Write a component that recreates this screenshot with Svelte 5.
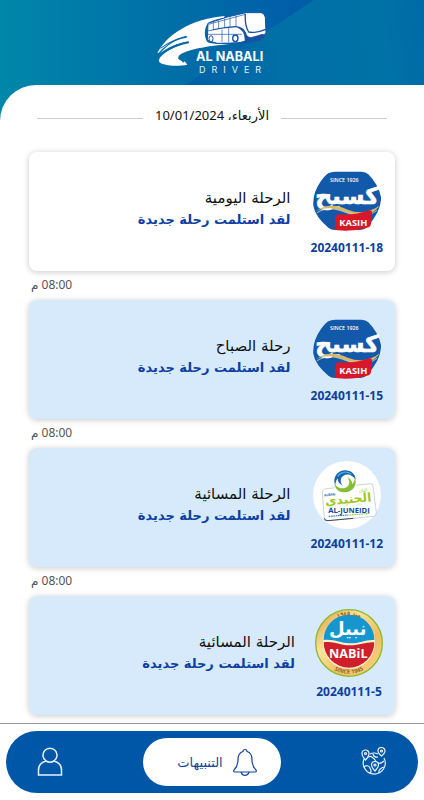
<script lang="ts">
	type Trip = { code: string; title: string; brand: 'kasih' | 'juneidi' | 'nabil'; unread: boolean; time?: string };

	const trips: Trip[] = [
		{ code: '20240111-18', title: 'الرحلة اليومية', brand: 'kasih', unread: false, time: '08:00 م' },
		{ code: '20240111-15', title: 'رحلة الصباح', brand: 'kasih', unread: true, time: '08:00 م' },
		{ code: '20240111-12', title: 'الرحلة المسائية', brand: 'juneidi', unread: true, time: '08:00 م' },
		{ code: '20240111-5', title: 'الرحلة المسائية', brand: 'nabil', unread: true }
	];

	let tab = $state('alerts');
</script>

<!-- company logos, all drawn on a 204 unit square -->
{#snippet kasih()}
	<svg class="brand" viewBox="38 12 204 204" direction="ltr" role="img" aria-label="Kasih">
		<path d="M84 37 Q92 32 104 32 L184 32 Q196 32 204 40 Q234 70 242 108 Q244 150 200 198 Q192 207 180 207 L104 207 Q92 207 84 200 Q44 166 39 134 Q36 96 62 60 Q74 43 84 37Z" fill="#125aa9" />
		<text x="132" y="62" font-size="16" font-weight="600" text-anchor="middle" fill="#fff" class="latin">SINCE 1926</text>
		<text x="140" y="128" font-size="70" font-weight="700" text-anchor="middle" class="arabic" fill="#fff" stroke="#fff" stroke-width="2">كسيح</text>
		<path d="M46 151 C82 126 112 134 142 146 C178 160 210 154 239 133 C212 170 176 168 140 155 C104 141 76 136 46 151Z" fill="#d9b767" />
		<path d="M50 155 C82 136 108 144 138 155 C172 168 204 168 230 148" fill="none" stroke="#f8ecd0" stroke-width="2" />
		<path d="M116 160 Q164 164 206 148 Q216 146 215 158 L212 188 Q211 198 200 200 Q160 212 112 208 Q102 207 103 198 L106 170 Q108 160 116 160Z" fill="#d8182a" />
		<text x="159" y="194" font-size="28" font-weight="700" text-anchor="middle" fill="#fff" class="latin">KASIH</text>
	</svg>
{/snippet}

{#snippet juneidi()}
	<svg class="brand" viewBox="39 30 204 204" direction="ltr" role="img" aria-label="Al-Juneidi">
		<circle cx="141" cy="132" r="102" fill="#fff" />
		<path d="M80 113 L210 98 Q218 97 219 106 L229 184 Q230 194 220 196 L84 209 Q74 210 73 200 L67 126 Q66 115 80 113Z" fill="#fff" stroke="#b4bcc2" stroke-width="2" />
		<path d="M73 202 Q74 210 84 209 L160 202" fill="none" stroke="#3d4854" stroke-width="3" />
		<circle cx="135" cy="91" r="36" fill="#fff" />
		<path d="M106 104 C96 80 112 58 136 58 C154 58 166 70 167 86 C158 72 142 66 130 74 C120 81 120 94 128 104 C118 98 112 92 114 82 C108 88 106 96 106 104Z" fill="#1764ad" />
		<path d="M104 98 C112 112 130 116 141 108 C150 101 150 88 142 78 C152 84 158 92 156 100 C162 94 165 86 164 78 C174 102 158 124 134 124 C116 124 104 112 104 98Z" fill="#84bf33" />
		<path d="M113 76 C120 63 140 59 154 70" fill="none" stroke="#54a9d9" stroke-width="4" />
		<g transform="rotate(-5 146 160)">
			<text x="92" y="130" font-size="10" font-weight="700" text-anchor="middle" fill="#1764ad" class="latin">ALBAN</text>
			<text x="192" y="126" font-size="13" text-anchor="middle" fill="#84bf33" class="arabic">البان</text>
			<text x="146" y="157" font-size="37" font-weight="700" text-anchor="middle" fill="#a3c724" class="arabic">الجنيدي</text>
		</g>
		<text x="147" y="187" font-size="23" font-weight="700" text-anchor="middle" fill="#17488f" class="latin">AL-JUNEIDI</text>
		<path d="M86 196 L145 192" stroke="#1764ad" stroke-width="3" stroke-dasharray="5 2" />
		<path d="M149 192 L209 187" stroke="#84bf33" stroke-width="3" stroke-dasharray="5 2" />
	</svg>
{/snippet}

{#snippet nabil()}
	<svg class="brand" viewBox="47 25 204 204" direction="ltr" role="img" aria-label="Nabil">
		<defs>
			<linearGradient id="gold" x1="0" y1="0" x2="1" y2="1">
				<stop offset="0" stop-color="#d89a3c" />
				<stop offset="0.35" stop-color="#fbe49b" />
				<stop offset="0.65" stop-color="#eebd62" />
				<stop offset="1" stop-color="#f7d98b" />
			</linearGradient>
			<path id="arcTop" d="M65 127 A84 84 0 0 1 233 127" />
			<path id="arcBottom" d="M57 127 A92 92 0 0 0 241 127" />
		</defs>
		<circle cx="149" cy="127" r="100" fill="url(#gold)" stroke="#8cb82b" stroke-width="4" />
		<circle cx="149" cy="127" r="78" fill="#fff3cf" />
		<path d="M73 118 A76 76 0 0 1 225 118 C198 116 182 129 150 128 C120 127 104 114 73 118Z" fill="#1596cf" />
		<path d="M73 125 C104 120 119 133 149 134 C182 135 198 123 225 125 A76 76 0 0 1 73 125Z" fill="#cf1f2c" />
		<text x="145" y="104" font-size="54" font-weight="700" text-anchor="middle" fill="#fff" class="arabic">نبيل</text>
		<text x="147" y="171" font-size="38" font-weight="700" text-anchor="middle" fill="#fff" class="latin">NABiL</text>
		<text font-size="16" font-weight="700" fill="#94672b" class="arabic" text-anchor="middle"><textPath href="#arcTop" startOffset="50%">منذ ١٩٤٥</textPath></text>
		<text font-size="17" font-weight="700" fill="#94672b" class="latin" text-anchor="middle"><textPath href="#arcBottom" startOffset="50%">SINCE 1945</textPath></text>
	</svg>
{/snippet}

<div class="app" dir="rtl" lang="ar">
	<header>
		<svg class="logo" viewBox="0 0 432 255" direction="ltr" role="img" aria-label="Al Nabali Driver">
			<!-- road -->
			<path d="M52 160 C80 104 150 58 254 48 L252 54 C226 58 208 64 202 72 C192 88 192 110 202 126 C212 132 240 132 268 132 C214 137 158 145 127 160 C112 168 110 178 124 182 L130 188 L134 184 L142 194 C112 200 70 198 58 186 C52 172 80 148 148 124 C112 130 82 142 61 160 C78 138 106 118 144 108 C110 114 82 130 56 158Z" fill="#fff" />
			<path d="M64 142 C88 124 116 112 140 107 L140 113 C110 119 84 130 60 148Z M66 159 C94 138 118 129 146 124 L147 130 C116 136 90 146 64 165Z" fill="#0868a7" />
			<!-- bus -->
			<path d="M204 70 Q262 48 318 38 L364 38 Q374 40 376 52 L378 98 Q376 112 360 120 Q320 130 232 130 L202 121Z" fill="#fff" stroke="#1552a3" stroke-width="3" />
			<path d="M204 92 Q248 80 288 78 Q310 80 318 98 Q320 110 334 112 L378 98 Q376 116 356 122 Q320 131 292 128 L314 122 Q316 92 290 82 Q250 84 204 94Z" fill="#1552a3" />
			<path d="M316 42 Q314 76 326 96 Q350 100 377 88" fill="none" stroke="#1552a3" stroke-width="4" />
			<path d="M220 65V90M236 61V87M254 56V83M270 52V80M288 47V79M205 73L316 43M204 103H306M246 88V126M266 84V126" fill="none" stroke="#1552a3" stroke-width="2" />
			<ellipse cx="213" cy="116" rx="6" ry="9" fill="#fff" stroke="#1552a3" stroke-width="3" />
			<ellipse cx="286" cy="115" rx="8" ry="10" fill="#fff" stroke="#1552a3" stroke-width="4" />
			<path d="M328 101 L342 105 L332 109Z M364 102 L375 95 L374 103Z" fill="#fff" />
			<text x="269" y="184" font-size="38" font-weight="700" text-anchor="middle" fill="#fff" class="wordmark">AL NABALI</text>
			<text x="177" y="220" font-size="27" fill="#e4f1fa" class="wordmark spaced">DRIVER</text>
		</svg>
	</header>

	<main>
		<h1>الأربعاء، 10/01/2024</h1>
		<ul>
			{#each trips as trip (trip.code)}
				<li>
					<article class:unread={trip.unread}>
						<div class="company">
							{#if trip.brand === 'kasih'}
								{@render kasih()}
							{:else if trip.brand === 'juneidi'}
								{@render juneidi()}
							{:else}
								{@render nabil()}
							{/if}
							<span class="code" dir="ltr">{trip.code}</span>
						</div>
						<div class="message">
							<h2>{trip.title}</h2>
							<p>لقد استلمت رحلة جديدة</p>
						</div>
					</article>
					{#if trip.time}
						<time>{trip.time}</time>
					{/if}
				</li>
			{/each}
		</ul>
	</main>

	<footer>
		<nav>
			<button class:active={tab === 'trips'} aria-label="الرحلات" onclick={() => (tab = 'trips')}>
				<svg width="26" height="30" viewBox="0 0 26 30" fill="none" stroke="currentColor" stroke-width="1.2">
					<path d="M3 12 A11 11 0 1 0 23 11 M9 7 Q13 5 17 7" />
					<path d="M4 13 Q8 8 11 10 T15 15 Q19 18 23 14 M3 20 Q7 17 9 21 T9 26 M18 26 Q17 22 23 20 M12 7 Q13 11 17 10" />
					<path d="M4.500 13 Q1 9 1 6.500 A3.500 3.500 0 0 1 8 6.500 Q8 9 4.500 13Z M20.500 9 Q17 6 17 4 A3.500 3.500 0 0 1 24 4 Q24 6 20.500 9Z M14 24 Q10.500 20 10.500 18 A3.500 3.500 0 0 1 17.500 18 Q17.500 20 14 24Z" fill="#0057a8" />
					<circle cx="4.500" cy="6.500" r="1" /><circle cx="20.500" cy="4" r="1" /><circle cx="14" cy="18" r="1" />
				</svg>
			</button>
			<button class:active={tab === 'alerts'} onclick={() => (tab = 'alerts')}>
				<svg width="24" height="28" viewBox="0 0 24 28" fill="none" stroke="currentColor" stroke-width="1.2">
					<path d="M10 3.500 A2 2 0 0 1 14 3.500 C18 4.500 19 8 19 12 C19 17 20 19 23 22 Q24 24 22 24 H2 Q0 24 1 22 C4 19 5 17 5 12 C5 8 6 4.500 10 3.500Z" />
					<path d="M8 24 Q9 27.400 12 27.400 Q15 27.400 16 24" />
				</svg>
				<span>التنبيهات</span>
			</button>
			<button class:active={tab === 'profile'} aria-label="الملف الشخصي" onclick={() => (tab = 'profile')}>
				<svg width="26" height="30" viewBox="0 0 26 30" fill="none" stroke="currentColor" stroke-width="1.5">
					<path d="M9 14 A7 7 0 1 1 17 14 C22 15.500 24.500 19 24.500 23 V28 H1.500 V23 C1.500 19 4 15.500 9 14 Q13 16.500 17 14" />
				</svg>
			</button>
		</nav>
	</footer>
</div>

<style>
	:global(body) {
		margin: 0;
		background: #fff;
	}

	.app {
		display: flex;
		flex-direction: column;
		min-height: 100vh;
		font-family: 'DejaVu Sans', sans-serif;
		color: #111;
	}

	.latin { font-family: 'Open Sans', sans-serif; }
	.arabic { font-family: 'DejaVu Sans', sans-serif; }
	.wordmark { font-family: Inter, sans-serif; }
	.spaced { letter-spacing: 18px; }

	header {
		position: relative;
		display: flex;
		justify-content: center;
		padding-bottom: 36px;
		background: linear-gradient(90deg, #0087aa, #006ca7 45%, #005ba8 75%);
	}

	/* lighter slanted panel on the right side */
	header::before {
		content: '';
		position: absolute;
		inset: 0;
		background: linear-gradient(80deg, #005ca8 40%, #0070a6 65%, #0072a5 90%, #0069a8);
		clip-path: polygon(74% 0, 100% 0, 100% 100%, 31% 100%);
	}

	.logo {
		position: relative;
		width: 144px;
		height: 85px;
	}

	main {
		position: relative;
		flex: 1;
		margin-top: -36px;
		padding: 20px 29px 7px;
		border-top-left-radius: 36px;
		background: #fff;
	}

	h1 {
		display: flex;
		align-items: center;
		gap: 12px;
		margin: 0 8px 27px;
		font-size: 13px;
		font-weight: 400;
		line-height: 20px;
	}

	h1::before,
	h1::after {
		content: '';
		flex: 1;
		height: 1px;
		margin-top: 6px;
		background: #ccc;
	}

	h1,
	time { font-family: 'Noto Sans', 'DejaVu Sans', sans-serif; }

	ul {
		margin: 0;
		padding: 0;
		list-style: none;
	}

	article {
		display: flex;
		align-items: center;
		gap: 20px;
		box-sizing: border-box;
		min-height: 119px;
		padding: 12px;
		border-radius: 8px;
		background: #fff;
		box-shadow: 0 1px 6px rgba(0, 0, 0, 0.22);
	}

	article.unread { background: #d6eafc; }

	.company {
		display: flex;
		flex-direction: column;
		align-items: center;
		gap: 5px;
	}

	.brand {
		width: 68px;
		height: 68px;
	}

	.code {
		font-family: 'Open Sans', sans-serif;
		font-size: 12px;
		font-weight: 700;
		line-height: 20px;
		color: #0d3f9b;
	}

	.message { padding-bottom: 6px; }

	h2,
	p {
		margin: 0;
		line-height: 22px;
	}

	h2 {
		font-size: 15px;
		font-weight: 400;
	}

	p {
		font-size: 13px;
		font-weight: 700;
		color: #0d3fa3;
	}

	time {
		display: block;
		padding: 4px 2px 5px;
		font-size: 12px;
		line-height: 20px;
		text-align: left;
		color: #555;
	}

	footer {
		position: relative;
		padding: 7px 6px;
		border-top: 1px solid #999;
		background: #fff;
	}

	nav {
		display: flex;
		align-items: center;
		justify-content: space-between;
		padding: 7px 18px;
		border-radius: 32px;
		background: #0057a8;
	}

	button {
		display: flex;
		align-items: center;
		justify-content: center;
		gap: 10px;
		min-width: 52px;
		height: 48px;
		padding: 0;
		border: 0;
		border-radius: 24px;
		background: none;
		font: inherit;
		font-size: 13px;
		color: #e8f0fb;
		cursor: pointer;
	}

	button.active {
		width: 138px;
		padding-left: 10px;
		background: #fff;
		color: #12439c;
	}
</style>
